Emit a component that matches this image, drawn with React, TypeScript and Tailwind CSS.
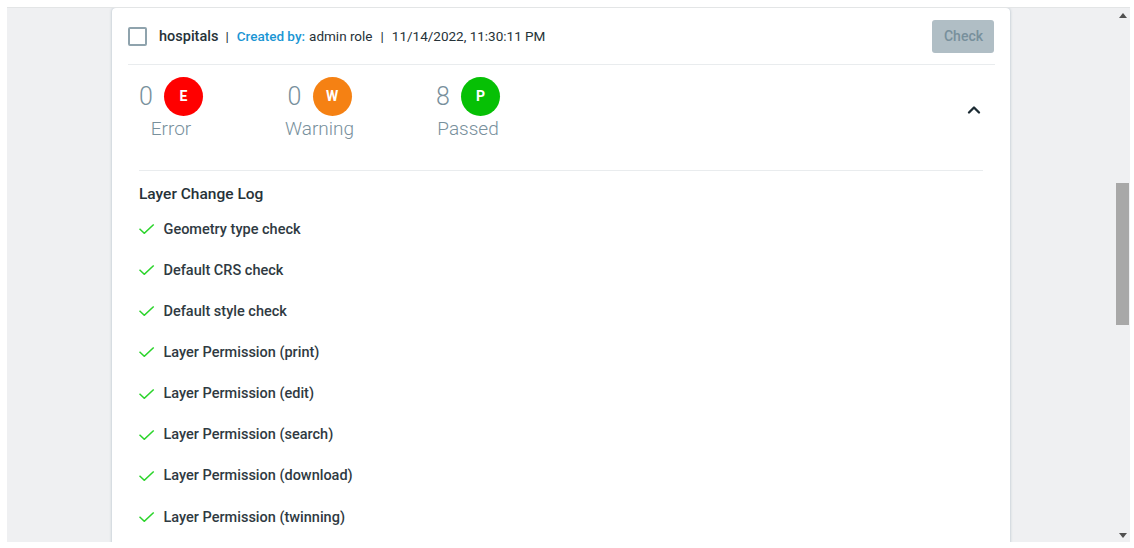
import { ChevronUp } from "lucide-react";

const CHECKS = [
  "Geometry type check",
  "Default CRS check",
  "Default style check",
  "Layer Permission (print)",
  "Layer Permission (edit)",
  "Layer Permission (search)",
  "Layer Permission (download)",
  "Layer Permission (twinning)",
];

const COUNTS = [
  { count: 0, letter: "E", label: "Error", color: "bg-[#ff0000]" },
  { count: 0, letter: "W", label: "Warning", color: "bg-[#f58113]" },
  { count: 8, letter: "P", label: "Passed", color: "bg-[#06c005]" },
];

export default function App() {
  return (
    <div className="w-[1134px] h-[548px] overflow-hidden bg-white pl-[7px] pr-[4px] pt-[7px] pb-[6px] font-['Roboto',sans-serif]">
      <div className="flex h-full bg-[#eff0f2] border-t border-[#e3e5e6] overflow-hidden">
        {/* card */}
        <div className="ml-[105px] w-[898px] h-[600px] shrink-0 bg-white rounded-t-[4px] shadow-[0_0_3px_rgba(90,120,140,0.45)] px-[16px]">
          {/* top row */}
          <div className="flex items-center h-[57px] border-b border-[#e9ecee] pr-[1px] -mr-[1px]">
            <div className="w-[19px] h-[19px] border-2 border-[#8fa3ad] rounded-[2px] shrink-0" />
            <span className="ml-[12px] text-[14.5px] font-medium text-[#263238] mt-[2px]">hospitals</span>
            <span className="ml-[7px] text-[13.5px] text-[#263238]">|</span>
            <span className="ml-[8px] text-[13.5px] font-medium text-[#1a96d4]">Created by:</span>
            <span className="ml-[4px] text-[13.5px] text-[#263238]">admin role</span>
            <span className="ml-[8px] text-[13.5px] text-[#263238]">|</span>
            <span className="ml-[8px] text-[13.5px] text-[#263238]">11/14/2022, 11:30:11 PM</span>
            <button className="ml-auto mt-[1px] pl-[1px] w-[62px] h-[33px] rounded-[3px] bg-[#b0bec5] text-[14px] font-medium text-[#78909c]">
              Check
            </button>
          </div>

          {/* counts */}
          <div className="flex items-start mx-[11px] h-[106px] border-b border-[#e9ecee] pt-[12px]">
            {COUNTS.map((c) => (
              <div key={c.label} className="w-[148.5px] shrink-0">
                <div className="w-[64px] flex flex-col items-center">
                  <div className="w-[64px] flex items-center gap-[13px]">
                    <span className="w-[12px] text-[25px] leading-[39px] font-light text-[#78909c]">{c.count}</span>
                    <span className={`w-[39px] h-[39px] rounded-full ${c.color} flex items-center justify-center text-[14px] font-bold text-white`}>
                      {c.letter}
                    </span>
                  </div>
                  <div className="whitespace-nowrap text-[19px] leading-[26px] font-light text-[#78909c]">{c.label}</div>
                </div>
              </div>
            ))}
            <ChevronUp className="ml-auto -mr-[1px] mt-[23px] text-[#1c2b33]" size={20} strokeWidth={2.8} />
          </div>

          {/* log */}
          <div className="mx-[11px] pt-[13px]">
            <div className="text-[15.5px] leading-[20px] font-medium text-[#263238]">Layer Change Log</div>
            <ul className="mt-[5px]">
              {CHECKS.map((name) => (
                <li key={name} className="flex items-center h-[41.14px]">
                  <svg width="16" height="10" viewBox="0 0 16 10" fill="none" className="shrink-0 -mt-[1px]">
                    <path d="M0.5 4.8 L5.3 9.3 L14.7 0.5" stroke="#2bd42b" strokeWidth="1.5" />
                  </svg>
                  <span className="ml-[8.5px] text-[14.5px] font-medium text-[#2f3a42]">{name}</span>
                </li>
              ))}
            </ul>
          </div>
        </div>

        {/* scrollbar */}
        <div className="ml-auto w-[15px] h-full flex flex-col items-center pt-[5px] pb-[4px]">
          <div className="w-0 h-0 border-x-[4px] border-x-transparent border-b-[5px] border-b-[#505050]" />
          <div className="mt-[165px] w-[13px] h-[142px] bg-[#a8a8a8]" />
          <div className="mt-auto w-0 h-0 border-x-[4px] border-x-transparent border-t-[5px] border-t-[#505050]" />
        </div>
      </div>
    </div>
  );
}
